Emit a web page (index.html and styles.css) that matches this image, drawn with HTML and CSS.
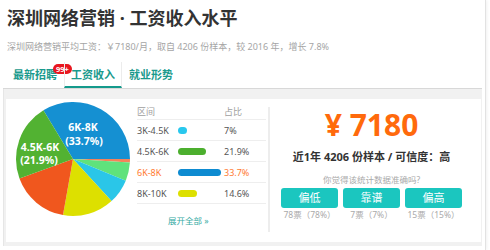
FILE: index.html
```html
<!DOCTYPE html>
<html lang="zh">
<head>
  <meta charset="UTF-8">
  <title>深圳网络营销 · 工资收入水平</title>
  <link rel="stylesheet" href="styles.css">
</head>
<body>
  <div class="page">
    <h1 class="title">深圳网络营销 · 工资收入水平</h1>
    <p class="sub">深圳网络营销平均工资：￥7180/月，取自 4206 份样本，较 2016 年，增长 7.8%</p>

    <ul class="tabs">
      <li class="tab">最新招聘<span class="badge">99+</span></li>
      <li class="tab on">工资收入</li>
      <li class="tab">就业形势</li>
    </ul>

    <div class="wrap">
      <div class="card">
        <!-- 饼图 -->
        <div class="pie">
          <svg width="116" height="116" viewBox="0 0 116 116">
            <path d="M58 58 L28.39 9.29 A57 57 0 0 1 115 58 Z" fill="#1590d2"/>
            <path d="M58 58 L115 58 A57 57 0 0 1 114.89 61.58 Z" fill="#f5825a"/>
            <path d="M58 58 L114.89 61.58 A57 57 0 0 1 110.74 79.63 Z" fill="#5fe27c"/>
            <path d="M58 58 L110.74 79.63 A57 57 0 0 1 96.51 100.02 Z" fill="#2ac6e8"/>
            <path d="M58 58 L96.51 100.02 A57 57 0 0 1 48 114.12 Z" fill="#dde000"/>
            <path d="M58 58 L48 114.12 A57 57 0 0 1 4.47 77.59 Z" fill="#f0571e"/>
            <path d="M58 58 L4.47 77.59 A57 57 0 0 1 28.39 9.29 Z" fill="#52b232"/>
            <text class="lbl" x="68" y="30">6K-8K</text>
            <text class="lbl" x="69" y="44">(33.7%)</text>
            <text class="lbl" x="25" y="50">4.5K-6K</text>
            <text class="lbl" x="24" y="63">(21.9%)</text>
          </svg>
        </div>

        <!-- 区间分布 -->
        <div class="dist">
          <div class="row head"><span class="c1">区间</span><span class="c2"></span><span class="c3">占比</span></div>
          <div class="row"><span class="c1">3K-4.5K</span><span class="c2"><i class="bar b-cyan" style="width:9px"></i></span><span class="c3">7%</span></div>
          <div class="row"><span class="c1">4.5K-6K</span><span class="c2"><i class="bar b-green" style="width:28px"></i></span><span class="c3">21.9%</span></div>
          <div class="row hl"><span class="c1">6K-8K</span><span class="c2"><i class="bar b-blue" style="width:43px"></i></span><span class="c3">33.7%</span></div>
          <div class="row"><span class="c1">8K-10K</span><span class="c2"><i class="bar b-yellow" style="width:19px"></i></span><span class="c3">14.6%</span></div>
          <a class="more" href="#">展开全部 »</a>
        </div>

        <!-- 平均工资 -->
        <div class="stat">
          <div class="money">¥ 7180</div>
          <div class="meta">近1年 4206 份样本 / 可信度：高</div>
          <div class="ask">你觉得该统计数据准确吗?</div>
          <div class="votes">
            <div class="vote"><span class="btn">偏低</span><span class="cnt">78票（78%）</span></div>
            <div class="vote"><span class="btn">靠谱</span><span class="cnt">7票（7%）</span></div>
            <div class="vote"><span class="btn">偏高</span><span class="cnt">15票（15%）</span></div>
          </div>
        </div>
      </div>
    </div>
  </div>
</body>
</html>
```

FILE: styles.css
```css
* { box-sizing: border-box; }
body {
  margin: 0;
  background: #fff;
  color: #333;
  font-family: "Noto Sans", "Noto Sans CJK SC", sans-serif;
}

.page { width: 486px; height: 250px; border-right: 1px solid #e2e2e2; box-shadow: 1px 0 3px rgba(0,0,0,.06); }

.title { margin: 0; padding: 8px 0 0 7px; font-size: 18px; line-height: 20px; font-weight: bold; color: #333; }
.sub { margin: 13px 0 0; padding-left: 7px; font-size: 9px; line-height: 12px; color: #a5a5a5; }

/* tabs */
.tabs {
  display: flex;
  list-style: none;
  margin: 9px 3px 0;
  padding: 0 0 0 3px;
  border-bottom: 1px solid #d8d8d8;
}
.tab {
  position: relative;
  width: 58px;
  height: 26px;
  padding-top: 2px;
  line-height: 22px;
  text-align: center;
  font-size: 11px;
  font-weight: bold;
  color: #1a9a8d;
  border-bottom: 2px solid transparent;
}
.tab.on { border-left: 1px solid #ececec; border-right: 1px solid #ececec; border-bottom-color: #149a8c; }
.badge {
  position: absolute;
  top: 2px;
  left: 47px;
  height: 10px;
  padding: 0 3px;
  border-radius: 5px;
  background: #e8171f;
  color: #fff;
  font-size: 7.5px;
  line-height: 10px;
  font-weight: bold;
}

/* 灰色区域 */
.wrap { margin: 0 3px; padding: 10px 1px 4px 2px; background: #f1f1f1; border-left: 1px solid #e6e6e6; }
.card { display: flex; height: 143px; background: #fff; }

.pie { margin: 2px 0 0 9px; width: 116px; height: 116px; }
.pie svg { display: block; }
.lbl { fill: #fff; font-size: 10.5px; font-weight: bold; font-family: "Noto Sans", sans-serif; text-anchor: middle; }

/* 区间表 */
.dist { width: 129px; margin: 5px 0 0 6px; font-size: 9px; color: #555; }
.row { display: flex; align-items: center; height: 21px; border-bottom: 1px solid #eee; }
.row.head { height: 16px; color: #a0a0a0; }
.row.hl { color: #ff7a32; }
.c1 { width: 41px; }
.c2 { width: 46px; }
.bar { display: block; height: 7px; border-radius: 4px; }
.b-cyan { background: #29c8ee; }
.b-green { background: #4caf2e; }
.b-blue { background: #0e8bd1; }
.b-yellow { background: #dde000; }
.more { display: block; margin-top: 11px; padding-left: 31px; font-size: 8.5px; line-height: 12px; color: #35aaa3; text-decoration: none; }

/* 右侧 */
.stat { flex: 1; margin: 8px 0 0 2px; height: 125px; padding-right: 8px; border-left: 2px solid #ededed; text-align: center; }
.money { margin-top: 3px; font-size: 30px; line-height: 30px; font-weight: bold; color: #ff6a0c; }
.meta { margin-top: 10px; font-size: 11px; line-height: 14px; font-weight: bold; color: #333; }
.ask { margin-top: 10px; font-size: 8.5px; line-height: 12px; color: #aaa; }
.votes { display: flex; justify-content: center; gap: 5px; margin-top: 2px; }
.vote { width: 57px; }
.btn { display: block; height: 20px; line-height: 20px; border-radius: 3px; background: #1bc6bf; color: #fff; font-size: 11px; }
.cnt { display: block; margin-top: 1px; font-size: 8.5px; line-height: 12px; color: #aaa; }
```
